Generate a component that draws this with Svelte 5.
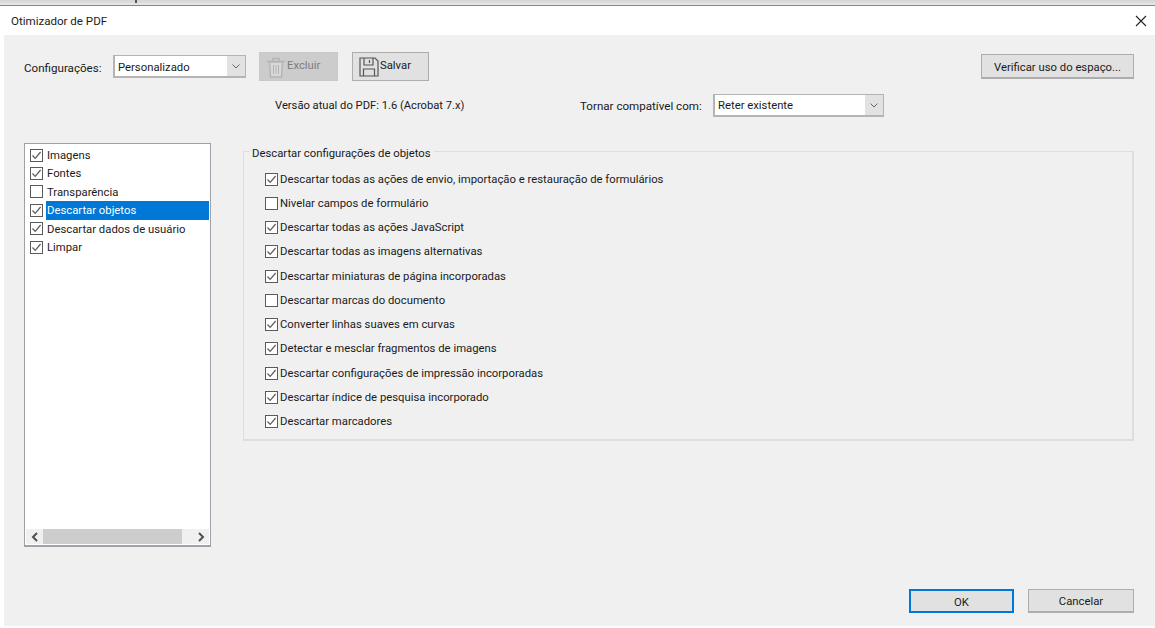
<script>
  const tree = [
    { label: 'Imagens', on: true },
    { label: 'Fontes', on: true },
    { label: 'Transparência', on: false },
    { label: 'Descartar objetos', on: true, selected: true },
    { label: 'Descartar dados de usuário', on: true },
    { label: 'Limpar', on: true }
  ];
  const options = [
    { label: 'Descartar todas as ações de envio, importação e restauração de formulários', on: true },
    { label: 'Nivelar campos de formulário', on: false },
    { label: 'Descartar todas as ações JavaScript', on: true },
    { label: 'Descartar todas as imagens alternativas', on: true },
    { label: 'Descartar miniaturas de página incorporadas', on: true },
    { label: 'Descartar marcas do documento', on: false },
    { label: 'Converter linhas suaves em curvas', on: true },
    { label: 'Detectar e mesclar fragmentos de imagens', on: true },
    { label: 'Descartar configurações de impressão incorporadas', on: true },
    { label: 'Descartar índice de pesquisa incorporado', on: true },
    { label: 'Descartar marcadores', on: true }
  ];
</script>

{#snippet check(on)}
  <svg class="check" width="13" height="13" viewBox="0 0 13 13">
    <rect x="0.5" y="0.5" width="12" height="12" fill="#fff" stroke="#5a5a5a" />
    {#if on}<path d="M2.5 6.5 L5.2 9.4 L10.6 3" fill="none" stroke="#5a5a5a" stroke-width="1.2" />{/if}
  </svg>
{/snippet}

{#snippet chevron()}
  <svg width="8" height="5" viewBox="0 0 8 5"><path d="M0.5 0.5 L4 4 L7.5 0.5" fill="none" stroke="#666" stroke-width="1" /></svg>
{/snippet}

<div class="window">
  <div class="behind"><i class="descender"></i></div>
  <header class="title">
    <span>Otimizador de PDF</span>
    <svg width="12" height="12" viewBox="0 0 12 12"><path d="M1 1 L11 11 M11 1 L1 11" stroke="#222" stroke-width="1.1" /></svg>
  </header>

  <div class="body">
    <div class="row-top">
      <span class="cfg-label">Configurações:</span>
      <div class="select cfg-select">
        <span class="value">Personalizado</span>
        <span class="arrow">{@render chevron()}</span>
      </div>
      <button class="tool disabled">
        <svg width="20" height="22" viewBox="0 0 20 22" fill="none" stroke="#b4b4b4">
          <path d="M1 5.5 H19 M7 5 V2.5 H13 V5" stroke-width="1.4" />
          <path d="M3.5 6 L4.5 21 H15.5 L16.5 6 Z" fill="#d8d8d8" stroke-width="1.4" />
          <path d="M7.5 9 V18 M10 9 V18 M12.5 9 V18" />
        </svg>
        <span>Excluir</span>
      </button>
      <button class="tool save">
        <svg width="20" height="20" viewBox="0 0 20 20" fill="none" stroke="#555" stroke-width="1.2">
          <path d="M1 1 H16 L19 4 V19 H1 Z" />
          <path d="M5 1 V8 H14 V1 M10.5 3 V6" />
          <path d="M4.5 19 V12 H15.5 V19" />
        </svg>
        <span>Salvar</span>
      </button>
      <button class="btn verify">Verificar uso do espaço...</button>
    </div>

    <div class="row-version">
      <span class="version">Versão atual do PDF: 1.6 (Acrobat 7.x)</span>
      <span class="compat">Tornar compatível com:</span>
      <div class="select compat-select">
        <span class="value">Reter existente</span>
        <span class="arrow">{@render chevron()}</span>
      </div>
    </div>

    <div class="main">
      <div class="listbox">
        <ul>
          {#each tree as item}
            <li>
              {@render check(item.on)}
              <span class="item-label" class:selected={item.selected}>{item.label}</span>
            </li>
          {/each}
        </ul>
        <div class="hscroll">
          <span class="nub">
            <svg width="8" height="10" viewBox="0 0 8 10"><path d="M6 1 L2 5 L6 9" fill="none" stroke="#505050" stroke-width="2" /></svg>
          </span>
          <span class="thumb"></span>
          <span class="nub">
            <svg width="8" height="10" viewBox="0 0 8 10"><path d="M2 1 L6 5 L2 9" fill="none" stroke="#505050" stroke-width="2" /></svg>
          </span>
        </div>
      </div>

      <fieldset class="group">
        <legend>Descartar configurações de objetos</legend>
        {#each options as o}
          <div class="opt">
            {@render check(o.on)}
            <span>{o.label}</span>
          </div>
        {/each}
      </fieldset>
    </div>

    <footer class="actions">
      <button class="btn ok">OK</button>
      <button class="btn cancel">Cancelar</button>
    </footer>
  </div>
</div>

<style>
  :global(body) {
    margin: 0;
    background: #fff;
  }
  .window {
    width: 1155px;
    height: 628px;
    display: flex;
    flex-direction: column;
    overflow: hidden;
    font-family: "Roboto", "Noto Sans", sans-serif;
    font-size: 11.3px;
    color: #1a1a1a;
  }
  .behind {
    height: 5px;
    flex: none;
    background: linear-gradient(#d4d4d4, #e8e8e8);
    border-bottom: 1px solid #4a96d2;
    padding-left: 135px;
  }
  .descender {
    display: block;
    width: 2px;
    height: 3px;
    background: #555;
  }
  .title {
    flex: none;
    height: 29px;
    display: flex;
    align-items: center;
    justify-content: space-between;
    padding: 0 8px 0 11px;
    background: #fff;
    font-size: 11.55px;
  }
  .body {
    flex: none;
    height: 591px;
    margin-left: 4px;
    background: #f0f0f0;
    position: relative;
    box-sizing: border-box;
    padding: 17px 21px 0 20px;
    display: flex;
    flex-direction: column;
  }
  .row-top {
    display: flex;
    align-items: center;
    height: 29px;
  }
  .cfg-label {
    width: 89px;
    flex: none;
    font-size: 11.6px;
    padding-top: 2px;
  }
  .select {
    display: flex;
    align-items: stretch;
    box-sizing: border-box;
    border-style: solid;
    border-width: 1px 1px 2px 2px;
    border-color: #b4b4b4;
    background: #e2e2e2;
    height: 23px;
  }
  .select .value {
    flex: 1;
    background: #fff;
    line-height: 21px;
    padding-left: 3px;
    white-space: nowrap;
  }
  .cfg-select .value {
    line-height: 23px;
  }
  .select .arrow {
    width: 18px;
    display: flex;
    align-items: center;
    justify-content: center;
  }
  .cfg-select {
    width: 133px;
  }
  .tool {
    height: 29px;
    box-sizing: border-box;
    display: flex;
    align-items: center;
    padding: 0 0 0 6px;
    gap: 1px;
    font: inherit;
    border: 1px solid #c4c4c4;
    flex: none;
  }
  .tool span { padding-bottom: 2px; }
  .disabled {
    width: 79px;
    margin-left: 13px;
    background: #cccccc;
    color: #7c7c7c;
    border-color: #c8c8c8;
  }
  .save {
    width: 77px;
    margin-left: 14px;
    background: #e1e1e1;
    border-color: #adadad;
    color: #1a1a1a;
  }
  .btn {
    box-sizing: border-box;
    font: inherit;
    color: #1a1a1a;
    background: #e1e1e1;
    border: 1px solid #adadad;
    border-bottom-width: 2px;
    padding: 2px 0 0;
  }
  .verify {
    width: 153px;
    height: 25px;
    margin-left: auto;
  }
  .row-version {
    display: flex;
    align-items: center;
    height: 23px;
    margin-top: 13px;
  }
  .version {
    margin-left: 251px;
    width: 305px;
    flex: none;
    font-size: 11.2px;
  }
  .compat {
    width: 133px;
    flex: none;
    font-size: 11.6px;
  }
  .compat-select {
    width: 171px;
  }
  .main {
    display: flex;
    margin-top: 26px;
    align-items: flex-start;
  }
  .listbox {
    width: 187px;
    height: 404px;
    box-sizing: border-box;
    background: #fff;
    border: 1px solid #a0a0a8;
    border-bottom-width: 2px;
    flex: none;
    display: flex;
    flex-direction: column;
    padding: 0 1px 1px 1px;
  }
  ul {
    list-style: none;
    margin: 0;
    padding: 2px 0 0 4px;
    flex: 1;
  }
  li {
    display: flex;
    align-items: center;
    height: 18.4px;
    gap: 3px;
  }
  .item-label {
    flex: 1;
    height: 100%;
    line-height: 20px;
    padding-left: 1px;
  }
  .item-label.selected {
    background: #0078d7;
    color: #fff;
  }
  .hscroll {
    height: 15px;
    display: flex;
    background: #f0f0f0;
  }
  .nub {
    width: 17px;
    display: flex;
    align-items: center;
    justify-content: center;
    flex: none;
  }
  .thumb {
    width: 139px;
    background: #cdcdcd;
  }
  .hscroll .nub:last-child {
    margin-left: auto;
  }
  .group {
    flex: 1;
    margin: 0 0 0 32px;
    padding: 7px 0 0 21px;
    height: 298px;
    box-sizing: border-box;
    border: 1px solid #dedede;
    min-width: 0;
    border-width: 1px 2px 2px 1px;
  }
  legend {
    padding: 4px 3px 0 2px;
    margin-left: -15px;
  }
  .opt {
    display: flex;
    align-items: center;
    height: 24.25px;
    gap: 2px;
  }
  .actions {
    position: absolute;
    top: 554px;
    right: 21px;
    display: flex;
    gap: 14px;
  }
  .ok, .cancel {
    height: 24px;
  }
  .ok {
    width: 105px;
    border: 2px solid #0078d7;
  }
  .cancel {
    width: 106px;
  }
  .check { flex: none; }
</style>
